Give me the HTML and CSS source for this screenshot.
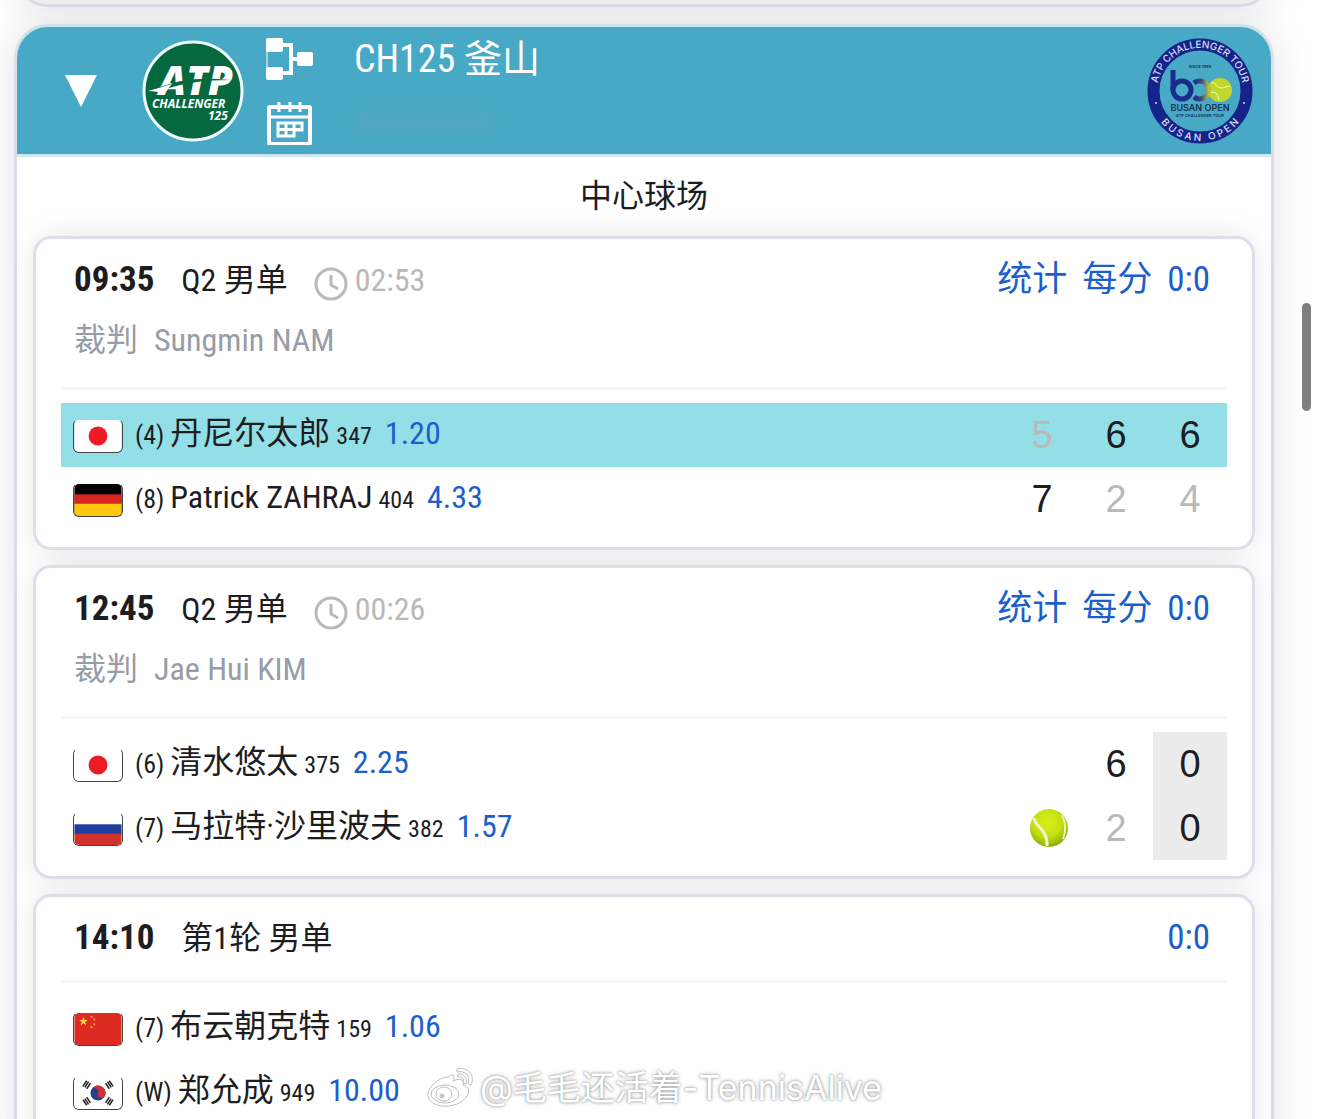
FILE: index.html
```html
<!DOCTYPE html>
<html lang="zh-CN">
<head>
<meta charset="utf-8">
<meta name="viewport" content="width=device-width, initial-scale=1">
<title>CH125 釜山</title>
<link rel="stylesheet" href="styles.css">
</head>
<body>
<svg class="defs" width="0" height="0" aria-hidden="true">
  <defs>
    <symbol id="clock" viewBox="0 0 34 34"><circle cx="17" cy="17" r="15" fill="none" stroke="currentColor" stroke-width="3"/><path d="M17 8v10l7 4" fill="none" stroke="currentColor" stroke-width="3"/></symbol>
    <symbol id="flag-jp" viewBox="0 0 50 34"><rect width="50" height="34" fill="#fff"/><circle cx="25" cy="17" r="10" fill="#ed1c24"/></symbol>
    <symbol id="flag-de" viewBox="0 0 50 34"><rect width="50" height="34" fill="#000"/><rect y="11" width="50" height="11" fill="#d8251f"/><rect y="21" width="50" height="13" fill="#ffc80f"/></symbol>
    <symbol id="flag-ru" viewBox="0 0 50 34"><rect width="50" height="34" fill="#fff"/><rect y="12" width="50" height="11" fill="#1f3fa0"/><rect y="22" width="50" height="12" fill="#d2322d"/></symbol>
    <symbol id="flag-cn" viewBox="0 0 50 34"><rect width="50" height="34" fill="#de2b22"/><path d="M9.500 4l1.100 3.400h3.500l-2.800 2.100 1.100 3.400-2.900-2.100-2.900 2.100 1.100-3.400-2.800-2.100h3.500z" fill="#ffd93b"/><g fill="#f5a13a"><circle cx="18" cy="4" r="1.200"/><circle cx="21" cy="7" r="1.200"/><circle cx="21" cy="12" r="1.200"/><circle cx="18" cy="15" r="1.200"/></g></symbol>
    <symbol id="flag-kr" viewBox="0 0 50 34"><rect width="50" height="34" fill="#fff"/><g transform="rotate(20 25 17)"><circle cx="25" cy="17" r="8" fill="#2b3c8c"/><path d="M17 17a8 8 0 0 1 16 0a4 4 0 0 1-8 0a4 4 0 0 0-8 0z" fill="#d0303a"/></g><g stroke="#222" stroke-width="1.600"><path d="M9 10l4-6M11 11l4-6M13 12.500l4-6"/><path d="M41 10l-4-6M39 11l-4-6M37 12.500l-4-6"/><path d="M9 24l4 6M11 23l4 6M13 21.500l4 6"/><path d="M41 24l-4 6M39 23l-4 6M37 21.500l-4 6"/></g></symbol>
    <radialGradient id="ball-shade" cx="45%" cy="35%" r="65%"><stop offset="0" stop-color="#d8f01c"/><stop offset=".6" stop-color="#c3de12"/><stop offset="1" stop-color="#8faa0c"/></radialGradient>
    <linearGradient id="ring-fade"><stop offset="0" stop-color="#1b2b8c"/><stop offset=".5" stop-color="#3b4a78"/><stop offset="1" stop-color="#b4c43a"/></linearGradient>
  </defs>
</svg>

<div class="app">
  <section class="previous-event" aria-hidden="true"></section>

  <section class="event">
    <header class="event-header">
      <button class="collapse" type="button" aria-label="收起">
        <svg width="32" height="32" viewBox="0 0 32 32"><path d="M0 0h32L16 32z" fill="#fff"/></svg>
      </button>
      <svg class="tour-logo" width="102" height="102" viewBox="0 0 102 102" role="img" aria-label="ATP Challenger 125">
        <circle cx="51" cy="51" r="49" fill="#05683f" stroke="#eefcff" stroke-width="3"/>
        <g fill="#fff" class="tour-type">
          <text x="17" y="55" class="tour-name">ATP</text>
          <text x="10" y="68" class="tour-level">CHALLENGER</text>
          <text x="66" y="80" class="tour-points">125</text>
        </g>
        <path d="M16 48C38 39 58 37 88 40C62 40 40 43 22 50z" fill="#05683f"/>
        <path d="M6 51C13 49 20 47 30 44L22 54C17 52 12 51 6 51z" fill="#fff"/>
      </svg>
      <nav class="event-tools">
        <a href="#draw" aria-label="签表">
          <svg width="48" height="44" viewBox="0 0 48 44"><path d="M10 8h15v28H10M25 22h12" fill="none" stroke="#fff" stroke-width="4"/><path d="M1 10v24" stroke="#fff" stroke-width="1"/><g fill="#fff"><rect x="0" y="1" width="17" height="14" rx="2"/><rect x="0" y="30" width="17" height="13" rx="2"/><rect x="31" y="15" width="16" height="14" rx="2"/></g></svg>
        </a>
        <a href="#schedule" aria-label="赛程">
          <svg width="48" height="44" viewBox="0 0 48 44"><g fill="none" stroke="#fff" stroke-width="3"><rect x="3" y="6" width="41" height="37" rx="1" stroke-width="4"/><path d="M4 16h40M13 1v10M24 1v10M34 1v10"/><path d="M12 22h24v7h-8v6H12zM12 28.500h22M20 22v13M28 22v13"/></g></svg>
        </a>
      </nav>
      <div class="event-title">
        <h1>CH125 釜山</h1>
        <span class="event-date" aria-hidden="true"></span>
      </div>
      <svg class="event-badge" width="106" height="106" viewBox="0 0 106 106" role="img" aria-label="Busan Open">
        <defs><path id="arc-top" d="M10 53a43 43 0 0 1 86 0"/><path id="arc-bottom" d="M3 53a50 50 0 0 0 100 0"/></defs>
        <circle cx="53" cy="53" r="46.500" fill="none" stroke="#14248a" stroke-width="12"/>
        <g class="badge-type" fill="#d5dcf5" text-anchor="middle">
          <text><textPath href="#arc-top" startOffset="50%">ATP CHALLENGER TOUR</textPath></text>
          <text><textPath href="#arc-bottom" startOffset="50%">B U S A N &#160; O P E N</textPath></text>
        </g>
        <circle cx="9" cy="65" r="1" fill="#d5dcf5"/><circle cx="97" cy="65" r="1" fill="#d5dcf5"/>
        <g text-anchor="middle" fill="#173355" class="badge-center">
          <text x="53" y="30" class="badge-tiny">SINCE 1999</text>
          <text x="53" y="73" class="badge-name">BUSAN OPEN</text>
          <text x="53" y="79" class="badge-tiny">ATP CHALLENGER TOUR</text>
        </g>
        <circle cx="73" cy="52" r="12" fill="#c1d72b"/>
        <path d="M64 45c4-2 6 5 10 5s5-2 9-2M63 55c5-2 8 0 9 7" fill="none" stroke="#f4fbd0" stroke-width="1"/>
        <path d="M26 32v20" stroke="#1b2b8c" stroke-width="5"/><circle cx="35" cy="52" r="9" fill="none" stroke="#1b2b8c" stroke-width="5"/>
        <path d="M47 45a9 9 0 1 1 0 14" fill="none" stroke="url(#ring-fade)" stroke-width="5"/>
      </svg>
    </header>

    <h2 class="court">中心球场</h2>

    <div class="matches">
      <article class="match">
        <header class="match-header">
          <div class="match-line">
            <strong class="start">09:35</strong><span class="round">Q2 男单</span>
            <span class="duration"><svg class="clock" width="34" height="34"><use href="#clock"/></svg>02:53</span>
            <nav class="match-links"><a href="#stats">统计</a><a href="#points">每分</a><a href="#h2h">0:0</a></nav>
          </div>
          <p class="umpire"><span>裁判</span><span>Sungmin NAM</span></p>
        </header>
        <table class="score">
          <tr class="winner">
            <th scope="row"><div class="player"><svg class="flag" width="50" height="34"><use href="#flag-jp"/></svg><span class="seed">(4)</span><span class="name">丹尼尔太郎</span><span class="rank">347</span><span class="odds">1.20</span></div></th>
            <td class="lost">5</td><td>6</td><td>6</td>
          </tr>
          <tr>
            <th scope="row"><div class="player"><svg class="flag" width="50" height="34"><use href="#flag-de"/></svg><span class="seed">(8)</span><span class="name">Patrick ZAHRAJ</span><span class="rank">404</span><span class="odds">4.33</span></div></th>
            <td>7</td><td class="lost">2</td><td class="lost">4</td>
          </tr>
        </table>
      </article>

      <article class="match">
        <header class="match-header">
          <div class="match-line">
            <strong class="start">12:45</strong><span class="round">Q2 男单</span>
            <span class="duration"><svg class="clock" width="34" height="34"><use href="#clock"/></svg>00:26</span>
            <nav class="match-links"><a href="#stats">统计</a><a href="#points">每分</a><a href="#h2h">0:0</a></nav>
          </div>
          <p class="umpire"><span>裁判</span><span>Jae Hui KIM</span></p>
        </header>
        <table class="score">
          <tr>
            <th scope="row"><div class="player"><svg class="flag" width="50" height="34"><use href="#flag-jp"/></svg><span class="seed">(6)</span><span class="name">清水悠太</span><span class="rank">375</span><span class="odds">2.25</span></div></th>
            <td></td><td>6</td><td class="game">0</td>
          </tr>
          <tr>
            <th scope="row"><div class="player"><svg class="flag" width="50" height="34"><use href="#flag-ru"/></svg><span class="seed">(7)</span><span class="name">马拉特·沙里波夫</span><span class="rank">382</span><span class="odds">1.57</span></div></th>
            <td class="serving"><svg width="40" height="40" viewBox="0 0 40 40" role="img" aria-label="发球"><circle cx="20" cy="20" r="19" fill="url(#ball-shade)"/><path d="M5 10C6 19 19 21 18 38" fill="none" stroke="#f0f6c4" stroke-width="3"/><path d="M33 7c3 6 5 14 1 24" fill="none" stroke="#e9f1b5" stroke-width="2"/></svg></td><td class="lost">2</td><td class="game">0</td>
          </tr>
        </table>
      </article>

      <article class="match">
        <header class="match-header">
          <div class="match-line">
            <strong class="start">14:10</strong><span class="round">第1轮 男单</span>
            <nav class="match-links"><a href="#h2h">0:0</a></nav>
          </div>
        </header>
        <table class="score">
          <tr>
            <th scope="row"><div class="player"><svg class="flag" width="50" height="34"><use href="#flag-cn"/></svg><span class="seed">(7)</span><span class="name">布云朝克特</span><span class="rank">159</span><span class="odds">1.06</span></div></th>
            <td></td><td></td><td></td>
          </tr>
          <tr>
            <th scope="row"><div class="player"><svg class="flag" width="50" height="34"><use href="#flag-kr"/></svg><span class="seed">(W)</span><span class="name">郑允成</span><span class="rank">949</span><span class="odds">10.00</span></div></th>
            <td></td><td></td><td></td>
          </tr>
        </table>
      </article>
    </div>
  </section>

  <div class="scroll-thumb"></div>
  <div class="watermark">
    <svg width="50" height="42" viewBox="0 0 50 42"><g fill="#fff" stroke="#bdbdbd" stroke-width="1"><path d="M21 10C28 5 28 10 26 14C32 11 38 12 36 18C42 20 43 24 40 29C35 37 24 40 15 39C5 38 0 32 1 26C2 20 12 10 21 10z"/><ellipse cx="18" cy="27" rx="14" ry="9"/><ellipse cx="17" cy="27" rx="8" ry="7"/><path d="M30 5c8-2 14 4 11 12l3 1c5-10-4-19-14-16zM31 10c4-1 7 2 5 6l3 1c2-6-3-11-8-10z"/><circle cx="15" cy="29" r="2" fill="#ccc"/></g></svg>
    <span>@毛毛还活着-TennisAlive</span>
  </div>
</div>
</body>
</html>
```
FILE: styles.css
```css
* { box-sizing: border-box; }

body {
  margin: 0;
  background: #fff;
  color: #1d1d1f;
  font-family: "Roboto Condensed", "Liberation Sans Narrow", "Noto Sans CJK SC", sans-serif;
  font-size: 32px;
}

a { color: inherit; text-decoration: none; }
svg { display: block; flex: none; }
.defs { position: absolute; }

.app {
  position: relative;
  height: 100vh;
  overflow: hidden;
  padding: 0 46px 0 14px;
}

.previous-event,
.event {
  border: 3px solid #dcdfe8;
  border-radius: 34px;
  box-shadow: 0 0 40px rgba(30, 30, 60, .12);
}

.previous-event {
  height: 80px;
  margin-top: -73px;
  background: #f0f1f1;
}

.event {
  margin-top: 17px;
  background: #fff;
  border-top-color: #c5e4ee;
}

/* Tournament header */
.event-header {
  display: flex;
  align-items: center;
  height: 130px;
  padding: 0 18px 0 48px;
  background: #47a9c5;
  border-bottom: 3px solid #cfe7f0;
  border-radius: 31px 31px 0 0;
}

.collapse { padding: 0; border: 0; background: none; }
.tour-logo { margin-left: 45px; }
.tour-type { font-family: "Open Sans", sans-serif; font-style: italic; font-weight: 700; }
.tour-name { font-size: 40px; font-weight: 800; }
.tour-level { font-size: 12px; }
.tour-points { font-size: 12px; }

.event-tools {
  display: grid;
  gap: 20px;
  margin-left: 22px;
}

.event-title {
  display: grid;
  gap: 28px;
  margin-left: 40px;
  padding-bottom: 10px;
  color: #fff;
}

.event-title h1 {
  margin: 0;
  font-size: 38px;
  line-height: 44px;
  font-weight: 400;
}

.event-date {
  width: 140px;
  height: 26px;
  background: #5aa5c2;
  filter: blur(6px);
  opacity: .4;
}

.event-badge { margin-left: auto; }
.badge-type { font-family: Inter, sans-serif; font-size: 10px; font-weight: 500; }
.badge-center { font-family: Inter, sans-serif; font-weight: 600; }
.badge-name { font-size: 9px; }
.badge-tiny { font-size: 4px; }

.court {
  margin: 0;
  font-size: 32px;
  line-height: 79px;
  font-weight: 400;
  text-align: center;
}

/* Match cards */
.matches {
  display: grid;
  gap: 15px;
  padding: 0 16px 16px;
  isolation: isolate;
}

.match {
  position: relative;
  padding: 8px 25px 16px;
  border: 3px solid #dcdfe8;
  border-radius: 18px;
  background: #fff;
}

/* The shadow sits behind every card so that neighbours stay white */
.match::before {
  content: "";
  position: absolute;
  inset: 0;
  z-index: -1;
  border-radius: 18px;
  box-shadow: 0 0 36px rgba(20, 20, 40, .11);
}

.match-header {
  margin-bottom: 13px;
  padding: 0 17px 11px 13px;
  border-bottom: 3px solid #f5f5f6;
}

.match-line {
  display: flex;
  align-items: baseline;
  line-height: 66px;
  height: 64px;
}

.start { font-size: 35px; }
.round { margin-left: 27px; }

.duration {
  display: flex;
  align-items: baseline;
  gap: 7px;
  margin-left: 26px;
  color: #b9b9b9;
}

.clock {
  align-self: center;
  margin-top: 8px;
}

.match-links {
  display: flex;
  gap: 15px;
  margin-left: auto;
  color: #1c5fcb;
  font-size: 35px;
}

.umpire {
  display: flex;
  gap: 16px;
  height: 65px;
  margin: 0;
  color: #989ca8;
  line-height: 58px;
}

.score {
  width: 100%;
  border-collapse: collapse;
  table-layout: fixed;
}

.score tr { height: 64px; }
.score th { padding: 0 0 0 12px; font-weight: 400; text-align: left; }

.score td {
  width: 74px;
  padding: 0;
  font-family: "Liberation Sans", Arial, sans-serif;
  font-size: 38px;
  text-align: center;
}

.winner { background: #93dfe8; }
.score .lost { color: #b9b9b9; }
.score .game { background: #ebebeb; }
.serving svg { margin-left: 24px; }

.player {
  display: flex;
  align-items: baseline;
  line-height: 60px;
  height: 64px;
  white-space: nowrap;
}

.flag {
  align-self: center;
  margin: 2px 12px 0 0;
  border: 1px solid #444;
  border-top-color: transparent;
  border-radius: 6px;
}

.seed { margin-right: 6px; font-size: 26px; }
.rank { margin-left: 6px; font-size: 24px; }
.odds { margin-left: 13px; color: #1c5fcb; }

.scroll-thumb {
  position: absolute;
  top: 303px;
  right: 9px;
  width: 9px;
  height: 108px;
  border-radius: 5px;
  background: #7f7f7f;
}

.watermark {
  position: absolute;
  bottom: 7px;
  left: 427px;
  display: flex;
  align-items: center;
  gap: 3px;
  color: #fff;
  font-family: Inter, "Noto Sans CJK SC", sans-serif;
  font-size: 34px;
  line-height: 48px;
  text-shadow: 0 0 2px #999, 0 0 4px #aaa;
  white-space: nowrap;
}
```
